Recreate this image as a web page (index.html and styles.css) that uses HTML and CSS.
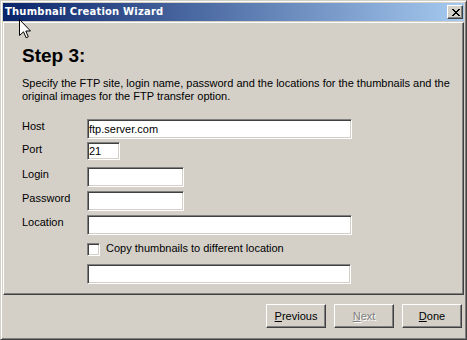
FILE: index.html
```html
<!DOCTYPE html>
<html lang="en">
  <head>
    <meta charset="UTF-8" />
    <title>Thumbnail Creation Wizard</title>
    <link rel="stylesheet" href="styles.css">
  </head>
  <body>
    <div class="window">
      <div class="titlebar">
        <span class="title">Thumbnail Creation Wizard</span>
        <button class="close" aria-label="Close">
          <svg width="8" height="7" viewBox="0 0 8 7" shape-rendering="crispEdges">
            <path d="M0 0h2v1h-2z M6 0h2v1h-2z M1 1h2v1h-2z M5 1h2v1h-2z M2 2h4v1h-4z M3 3h2v1h-2z M2 4h4v1h-4z M1 5h2v1h-2z M5 5h2v1h-2z M0 6h2v1h-2z M6 6h2v1h-2z" fill="#000" />
          </svg>
        </button>
      </div>

      <div class="panel">
        <h1>Step 3:</h1>
        <p class="intro">
          Specify the FTP site, login name, password and the locations for the thumbnails and the
          original images for the FTP transfer option.
        </p>

        <div class="form">
          <label class="label">Host</label>
          <input class="field field-wide" type="text" value="ftp.server.com" />

          <label class="label">Port</label>
          <input class="field field-port" type="text" value="21" />

          <label class="label">Login</label>
          <input class="field field-mid" type="text" />

          <label class="label">Password</label>
          <input class="field field-mid" type="password" />

          <label class="label">Location</label>
          <input class="field field-wide" type="text" />

          <div class="check-row">
            <input class="check" type="checkbox" id="copyThumbs" />
            <label for="copyThumbs">Copy thumbnails to different location</label>
          </div>

          <input class="field field-wide field-last" type="text" />
        </div>
      </div>

      <div class="actions">
        <button class="btn"><u>P</u>revious</button>
        <button class="btn" disabled><u>N</u>ext</button>
        <button class="btn"><u>D</u>one</button>
      </div>
    </div>

    <!-- mouse pointer resting on the title bar -->
    <svg class="cursor" width="12" height="20" viewBox="0 0 12 20">
      <path d="M0.5 0.5 V16.5 L4.5 12.8 L7.2 18.8 L9.3 17.8 L6.8 12 H11.5 Z" fill="#fff" stroke="#000" stroke-width="1" stroke-linejoin="miter" />
    </svg>
  </body>
</html>
```

FILE: styles.css
```css
:root {
  --face: #d4d0c8;
  --shadow: #808080;
  --dark: #404040;
  --light: #ffffff;
}

body {
  margin: 0;
  font-family: "Liberation Sans", Arial, sans-serif;
  font-size: 11px;
  color: #000;
  background: var(--face);
}

.window {
  width: 467px;
  height: 340px;
  box-sizing: border-box;
  border: 1px solid;
  border-color: var(--face) var(--dark) var(--dark) var(--face);
  box-shadow: inset 1px 1px var(--light), inset -1px -1px var(--shadow);
  padding: 2px;
  background: var(--face);
  display: flex;
  flex-direction: column;
}

.titlebar {
  height: 18px;
  flex: none;
  margin-bottom: 1px;
  padding: 0 1px 0 2px;
  display: flex;
  align-items: center;
  justify-content: space-between;
  background: linear-gradient(to right, #0a246a, #a6caf0);
}

.title {
  font-family: "DejaVu Sans", Verdana, sans-serif;
  font-weight: bold;
  font-size: 10px;
  letter-spacing: 0.2px;
  line-height: 18px;
  color: #fff;
}

.close {
  width: 16px;
  height: 14px;
  padding: 0;
  margin: 0;
  box-sizing: border-box;
  border: 1px solid;
  border-color: var(--light) var(--dark) var(--dark) var(--light);
  box-shadow: inset -1px -1px var(--shadow);
  background: var(--face);
  display: flex;
  align-items: center;
  justify-content: center;
}

.close svg {
  display: block;
  margin-left: 1px;
}

.panel {
  height: 273px;
  flex: none;
  box-sizing: border-box;
  border: 1px solid;
  border-color: var(--light) var(--dark) var(--dark) var(--light);
  box-shadow: inset -1px -1px var(--shadow);
  padding: 22px 10px 0 18px;
}

h1 {
  margin: 0;
  font-size: 19px;
  line-height: 22px;
  font-weight: bold;
}

.intro {
  margin: 10px 0 0 0;
  line-height: 13px;
}

.form {
  margin-top: 16px;
  display: grid;
  grid-template-columns: 65px auto;
  grid-template-rows: 23px 25px 24px 24px 28px 21px 20px;
  align-items: start;
}

.label {
  line-height: 13px;
  padding-top: 1px;
}

.field {
  margin: 0;
  padding: 0 1px;
  height: 20px;
  box-sizing: border-box;
  font-family: "Liberation Sans", Arial, sans-serif;
  font-size: 11px;
  color: #000;
  background: #fff;
  border: 1px solid;
  border-color: var(--shadow) var(--light) var(--light) var(--shadow);
  box-shadow: inset 1px 1px var(--dark), inset -1px -1px var(--face);
  outline: none;
}

.field-wide {
  width: 265px;
}

.field-mid {
  width: 97px;
}

.field-port {
  width: 33px;
  height: 18px;
}

.field-last {
  grid-column: 2;
  width: 264px;
}

.check-row {
  grid-column: 2;
  display: flex;
  align-items: flex-start;
  line-height: 13px;
}

.check-row label {
  margin-left: 6px;
  margin-top: -1px;
}

.check {
  appearance: none;
  margin: 0;
  width: 13px;
  height: 13px;
  box-sizing: border-box;
  background: #fff;
  border: 1px solid;
  border-color: var(--shadow) var(--light) var(--light) var(--shadow);
  box-shadow: inset 1px 1px var(--dark), inset -1px -1px var(--face);
}

.actions {
  flex: 1;
  display: flex;
  justify-content: flex-end;
  align-items: flex-start;
  gap: 8px;
  padding: 9px 2px 0 0;
}

.btn {
  width: 60px;
  height: 24px;
  margin: 0;
  padding: 0;
  box-sizing: border-box;
  font-family: "Liberation Sans", Arial, sans-serif;
  font-size: 11px;
  color: #000;
  background: var(--face);
  border: 1px solid;
  border-color: var(--light) var(--dark) var(--dark) var(--light);
  box-shadow: inset -1px -1px var(--shadow);
}

.btn:disabled {
  color: var(--shadow);
  text-shadow: 1px 1px 0 var(--light);
}

.cursor {
  position: absolute;
  left: 19px;
  top: 19px;
}
```
